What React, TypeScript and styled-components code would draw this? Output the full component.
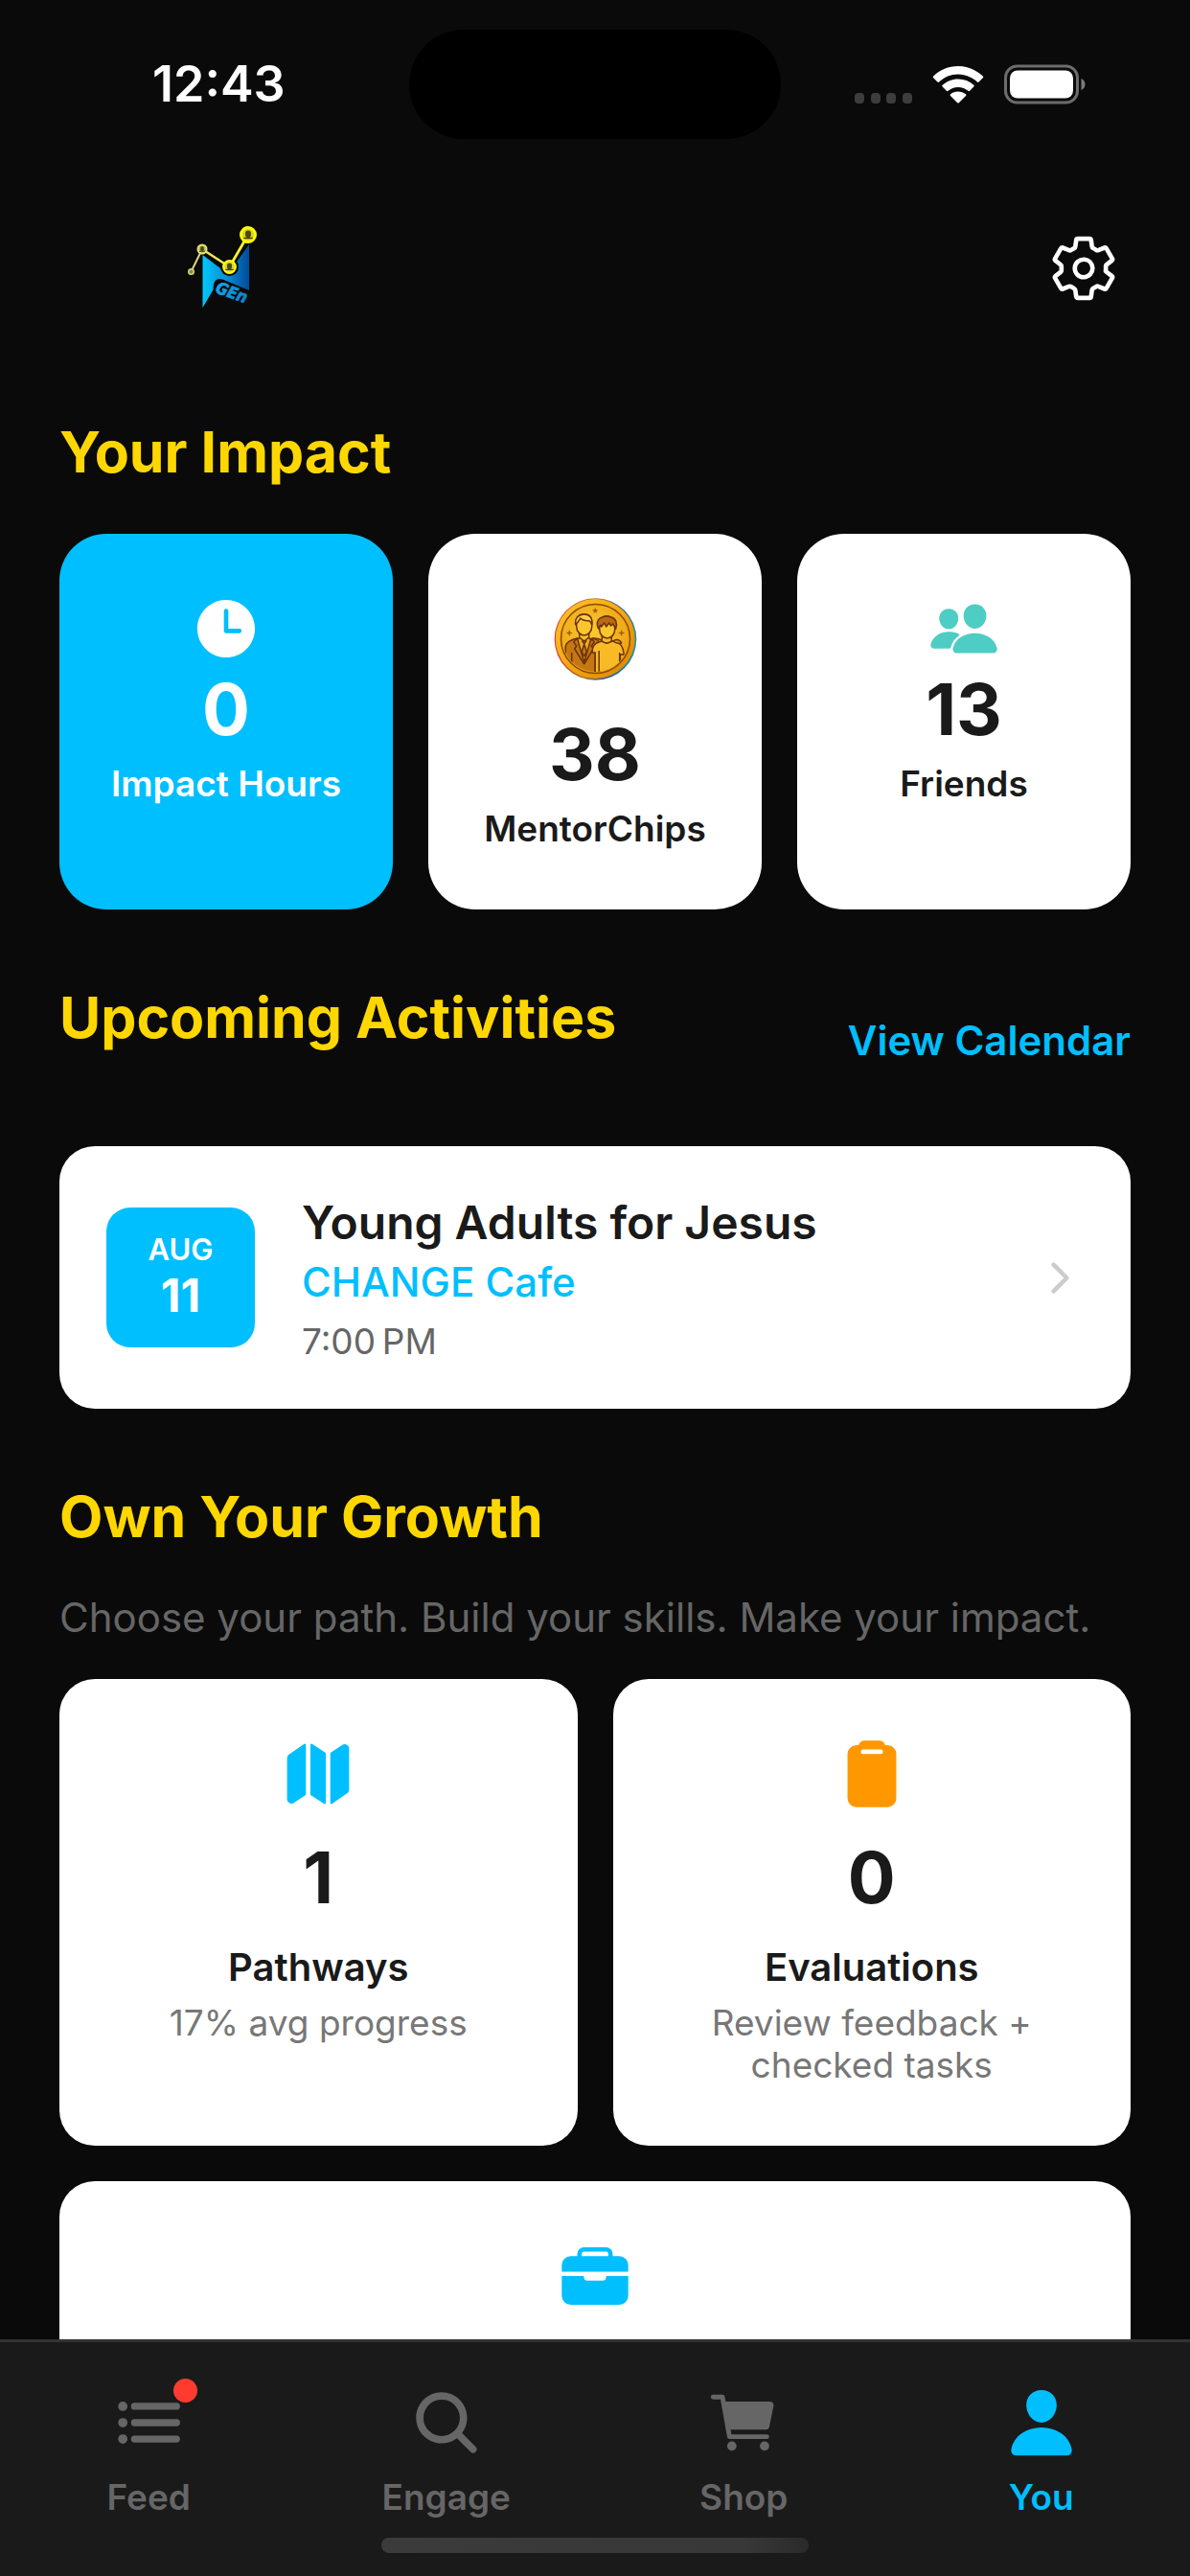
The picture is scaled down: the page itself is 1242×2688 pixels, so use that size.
import React from "react";
import styled, { createGlobalStyle } from "styled-components";
import {
  IoBriefcase,
  IoCart,
  IoChevronForward,
  IoClipboard,
  IoList,
  IoMap,
  IoPeople,
  IoPerson,
  IoSearch,
  IoSettingsOutline,
  IoTime,
} from "react-icons/io5";

const color = {
  page: "#0a0a0a",
  bar: "#1a1a1a",
  ink: "#1a1a1a",
  line: "#333333",
  muted: "#666666",
  soft: "#777777",
  sky: "#00bfff",
  gold: "#ffd700",
  teal: "#4ecdc4",
  orange: "#ff9800",
  red: "#ff3b30",
  white: "#ffffff",
};

const GlobalStyle = createGlobalStyle`
  *, *::before, *::after { box-sizing: border-box; }
  body {
    margin: 0;
    background: ${color.page};
    font-family: Inter, "Liberation Sans", sans-serif;
  }
  h1, h2, p { margin: 0; }
  a { color: inherit; text-decoration: none; }
  button { font: inherit; color: inherit; background: none; border: 0; padding: 0; }
`;

const Screen = styled.div`
  display: flex;
  flex-direction: column;
  height: 100vh;
  overflow: hidden;
  background: ${color.page};
`;

const StatusBar = styled.div`
  display: grid;
  grid-template-columns: 1fr 388px 1fr;
  align-items: center;
  flex: none;
  height: 176px;
`;

const Clock = styled.span`
  padding-left: 159px;
  color: ${color.white};
  font-size: 52px;
  line-height: 62px;
  font-weight: 600;
`;

const Island = styled.div`
  height: 114px;
  border-radius: 57px;
  background: #000000;
`;

const StatusIcons = styled.div`
  display: flex;
  justify-content: flex-end;
  align-items: center;
  gap: 21px;
  padding-right: 109px;
`;

const Scroll = styled.div`
  flex: 1;
  min-height: 0;
  overflow-y: auto;
  scrollbar-width: none;
`;

const Header = styled.header`
  display: flex;
  justify-content: space-between;
  align-items: center;
  padding: 49px;
`;

const IconButton = styled.button`
  display: flex;
  padding: 25px;
  margin: -7px 0;
  color: ${color.white};
  font-size: 74px;
`;

const Main = styled.main`
  display: flex;
  flex-direction: column;
  gap: 76px;
  padding: 51px 62px 62px;
`;

const SectionTitle = styled.h2`
  color: ${color.gold};
  font-size: 59px;
  line-height: 74px;
  font-weight: 700;
  margin-bottom: 48px;
`;

const SectionHead = styled.div`
  display: flex;
  justify-content: space-between;
  align-items: center;
  margin-bottom: 49px;
`;

const TextLink = styled.a`
  color: ${color.sky};
  font-size: 42px;
  line-height: 62px;
  font-weight: 600;
`;

const Lead = styled.p`
  color: ${color.muted};
  font-size: 42px;
  line-height: 62px;
  margin: -11px 0 33px;
`;

const Grid = styled.div<{ $columns: number }>`
  display: grid;
  grid-template-columns: repeat(${(p) => p.$columns}, minmax(0, 1fr));
  gap: 37px;
`;

const Card = styled.div<{ $filled?: boolean; $large?: boolean; $wide?: boolean }>`
  display: flex;
  flex-direction: column;
  align-items: center;
  padding: 62px 24px;
  border-radius: ${(p) => (p.$large ? 49 : 37)}px;
  background: ${(p) => (p.$filled ? color.sky : color.white)};
  color: ${(p) => (p.$filled ? color.white : color.ink)};
  text-align: center;
  ${(p) => p.$wide && "grid-column: 1 / -1; min-height: 392px;"}
`;

const CardIcon = styled.div<{ $color: string; $gap?: number }>`
  display: flex;
  font-size: 74px;
  color: ${(p) => p.$color};
  margin-bottom: ${(p) => p.$gap ?? 0}px;
`;

const Figure = styled.div`
  font-size: 74px;
  line-height: 94px;
  font-weight: 700;
`;

const StatLabel = styled.div`
  margin-top: 9px;
  font-size: 37px;
  line-height: 44px;
  font-weight: 600;
`;

const GrowthLabel = styled.div`
  margin-top: 22px;
  font-size: 40px;
  line-height: 50px;
  font-weight: 600;
`;

const GrowthNote = styled.p`
  margin-top: 11px;
  max-width: 360px;
  color: ${color.soft};
  font-size: 37px;
  line-height: 44px;
`;

const Activity = styled.a`
  display: flex;
  align-items: center;
  gap: 49px;
  padding: 49px;
  border-radius: 37px;
  background: ${color.white};
`;

const DateBox = styled.div`
  flex: none;
  width: 155px;
  padding: 25px 0;
  border-radius: 25px;
  background: ${color.sky};
  color: ${color.white};
  text-align: center;
`;

const Month = styled.div`
  font-size: 31px;
  line-height: 38px;
  font-weight: 600;
`;

const Day = styled.div`
  font-size: 48px;
  line-height: 58px;
  font-weight: 700;
`;

const ActivityText = styled.div`
  flex: 1;
  min-width: 0;
`;

const ActivityTitle = styled.div`
  color: ${color.ink};
  font-size: 48px;
  line-height: 62px;
  font-weight: 600;
`;

const Place = styled.div`
  color: ${color.sky};
  font-size: 42px;
  line-height: 62px;
  font-weight: 500;
`;

const Time = styled.div`
  margin-top: 10px;
  color: ${color.muted};
  font-size: 37px;
  line-height: 42px;
`;

const Chevron = styled(IoChevronForward)`
  flex: none;
  color: #cccccc;
  font-size: 49px;
`;

const Footer = styled.footer`
  flex: none;
  padding: 45px 0 24px;
  border-top: 3px solid ${color.line};
  background: ${color.bar};
`;

const Tabs = styled.nav`
  display: grid;
  grid-template-columns: repeat(4, 1fr);
`;

const Tab = styled.a<{ $active?: boolean }>`
  display: flex;
  flex-direction: column;
  align-items: center;
  gap: 17px;
  color: ${(p) => (p.$active ? color.sky : color.muted)};
  font-size: 37px;
  line-height: 44px;
  font-weight: 600;
`;

const TabIcon = styled.span`
  position: relative;
  display: flex;
  font-size: 78px;
`;

const Badge = styled.span`
  position: absolute;
  top: -7px;
  right: -12px;
  width: 25px;
  height: 25px;
  border-radius: 50%;
  background: ${color.red};
`;

const HomeIndicator = styled.div`
  width: 446px;
  max-width: 50%;
  height: 16px;
  margin: 20px auto 0;
  border-radius: 8px;
  background: linear-gradient(90deg, #3b3b3b 0%, #383838 85%, #2a2a2a 100%);
`;

function SignalDots() {
  return (
    <svg width="60" height="42" viewBox="0 0 60 42" fill="#3d3d3d" aria-hidden="true">
      {[0, 17, 33, 50].map((x) => (
        <rect key={x} x={x} y="30" width="10" height="11" rx="4" />
      ))}
    </svg>
  );
}

function Wifi() {
  return (
    <svg width="54" height="42" viewBox="0 0 54 42" fill="#ffffff" aria-hidden="true">
      <path d="M27 2C17 2 8 6 1.200 12.400a1.200 1.200 0 0 0 0 1.800l4.200 4.300a1.200 1.200 0 0 0 1.700 0C12.400 13.300 19.300 10.400 27 10.400s14.600 2.900 19.900 8.100a1.200 1.200 0 0 0 1.700 0l4.200-4.300a1.200 1.200 0 0 0 0-1.800C46 6 37 2 27 2Z" />
      <path d="M27 15.500c-6.400 0-12 2.400-16.300 6.300a1.200 1.200 0 0 0 0 1.800l4.200 4.200a1.200 1.200 0 0 0 1.700 0A15.500 15.500 0 0 1 27 24c4 0 7.600 1.400 10.400 3.800a1.200 1.200 0 0 0 1.700 0l4.200-4.200a1.200 1.200 0 0 0 0-1.800A24 24 0 0 0 27 15.500Z" />
      <path d="M27 28.500c-3 0-5.700.900-8 2.700a1.200 1.200 0 0 0 0 1.800l7.200 7.200a1.100 1.100 0 0 0 1.600 0L35 33a1.200 1.200 0 0 0 0-1.800 12.800 12.800 0 0 0-8-2.700Z" />
    </svg>
  );
}

function Battery() {
  return (
    <svg width="85" height="42" viewBox="0 0 85 42" aria-hidden="true">
      <rect x="1.500" y="2" width="75" height="38" rx="12" fill="none" stroke="#6c6c6c" strokeWidth="3" />
      <rect x="6" y="6.500" width="66" height="29" rx="8" fill="#ffffff" />
      <path d="M80.500 15c2.500 1 4 3.400 4 6s-1.500 5-4 6Z" fill="#7c7c7c" />
    </svg>
  );
}

function Pawn({ x, y, s }: { x: number; y: number; s: number }) {
  return (
    <g transform={`translate(${x} ${y}) scale(${s})`} fill="#4a480c">
      <circle cy="-1.500" r="2.700" />
      <path d="M-4.400 3.800v-1.400h2.600c-.300-1-1-1.600-1-2.600h5.600c0 1-.700 1.600-1 2.600h2.600v1.400Z" />
    </g>
  );
}

function Logo() {
  return (
    <svg width="366" height="110" viewBox="-3 5 110 110" role="img" aria-label="N GEn">
      <defs>
        <linearGradient id="flag" x1="0" y1="0" x2="1" y2="0">
          <stop offset="0" stopColor="#00c8fa" />
          <stop offset="0.500" stopColor="#0a8fd8" />
          <stop offset="1" stopColor="#004b98" />
        </linearGradient>
        <linearGradient id="word" x1="0" y1="0" x2="1" y2="0">
          <stop offset="0" stopColor="#14a5e6" />
          <stop offset="1" stopColor="#0c84cc" />
        </linearGradient>
      </defs>
      <path d="M31.500 46 58 66 80 35V88L62 80 44 80 31.500 101Z" fill="url(#flag)" />
      <path d="M19.500 63.500 31 40 59.500 58.500 79 25" fill="none" stroke="#0a0a0a" strokeWidth="6" />
      <circle cx="59.500" cy="58.500" r="9.500" fill="#0a0a0a" />
      <path d="M43 77q1-6 6-6 4 0 8 2.500L80 83v20H58L44 87q-2-3-1-10Z" fill="#0a0a0a" />
      <text
        x="44"
        y="85"
        transform="rotate(20 44 85)"
        fill="url(#word)"
        stroke="url(#word)"
        strokeWidth="0.700"
        fontFamily="'DejaVu Sans Condensed', 'Liberation Sans', sans-serif"
        fontSize="17"
        fontWeight="700"
        fontStyle="italic"
      >
        GEn
      </text>
      <path d="M19.500 63.500 31 40" stroke="#d9d873" strokeWidth="2" />
      <path d="M31 40 59.500 58.500" stroke="#eeec55" strokeWidth="2.400" />
      <path d="M59.500 58.500 79 25" stroke="#f8f52a" strokeWidth="2.800" />
      <circle cx="19.500" cy="63.500" r="2.800" fill="#8a8942" stroke="#d6d47c" strokeWidth="1.400" />
      <circle cx="31" cy="40" r="4.600" fill="#b5b35c" stroke="#e9e77a" strokeWidth="1.800" />
      <circle cx="59.500" cy="58.500" r="6.300" fill="#d6d33a" stroke="#fdfb05" strokeWidth="2.200" />
      <circle cx="79" cy="25" r="7.500" fill="#d8d520" stroke="#ffff00" strokeWidth="3" />
      <Pawn x={31} y={40} s={0.7} />
      <Pawn x={59.5} y={58.5} s={0.95} />
      <Pawn x={79} y={25} s={1.1} />
    </svg>
  );
}

function Coin() {
  return (
    <svg width="99" height="99" viewBox="11.300 10 99 99" role="img" aria-label="MentorChips coin">
      <defs>
        <linearGradient id="rim" x1="0" y1="0" x2="1" y2="1">
          <stop offset="0" stopColor="#ffc32b" />
          <stop offset="0.500" stopColor="#f5a80f" />
          <stop offset="1" stopColor="#d98200" />
        </linearGradient>
        <linearGradient id="fringe" x1="0" y1="0.400" x2="1" y2="0.600">
          <stop offset="0" stopColor="#d8262c" />
          <stop offset="0.450" stopColor="#a8742c" />
          <stop offset="0.750" stopColor="#2c5f9c" />
          <stop offset="1" stopColor="#1795a8" />
        </linearGradient>
        <radialGradient id="face" cx="0.450" cy="0.400" r="0.600">
          <stop offset="0" stopColor="#fdc82f" />
          <stop offset="1" stopColor="#eca314" />
        </radialGradient>
        <clipPath id="faceClip">
          <circle cx="60.800" cy="57.500" r="34.500" />
        </clipPath>
      </defs>
      <circle cx="60.800" cy="58" r="42.800" fill="url(#fringe)" />
      <circle cx="60.500" cy="57.600" r="41.500" fill="url(#rim)" />
      <circle cx="60.800" cy="57.500" r="36" fill="url(#face)" stroke="#8a4a06" strokeWidth="1.500" />
      <g clipPath="url(#faceClip)" stroke="#6b3208" strokeWidth="1.500" strokeLinejoin="round">
        <path d="M29.500 96V67c0-6 5-8 12-10l8 12 8-12c5 1 8 3 8 6v33Z" fill="#c57812" />
        <path d="M42 58 49 82 56 58 49 54Z" fill="#edaa22" />
        <path d="M41.500 57 38 61l3 4-2 3 10 16M56.500 57l3 4-3 4 2 3-9.500 16" fill="none" />
        <path d="m47 60 2 2.500 2-2.500-2-2Zm2 3-2.500 8L49 76l2.500-5Z" fill="#c57812" />
        <path d="M44 51v5l5 4 5-4v-5Z" fill="#f9c02c" />
        <path d="M41 40c0-5 3-8 8-8s8 3 8 8v5c0 5-4 9-8 9s-8-4-8-9Z" fill="#fbc52e" />
        <path d="M40 43c-1-7 3-11 9-11 6 0 9 4 8 11l-2-4c-5 0-8-1-10-3-1 3-3 4-5 7Z" fill="#fccf48" />
        <path d="M36 72v22M60.500 72v24" fill="none" />
        <path d="M60.500 96V72h-3c0-8 3-10 10-12l5 2 6-2c9 1 11 6 12 14h-4v22Z" fill="#f8ba25" />
        <path d="M64.500 70v26M86 72v20" fill="none" />
        <path d="M67.500 54v6q5 4 10 0v-6Z" fill="#f8ba25" />
        <path d="M65 45c0-5 3-8 8-8s8 3 8 8v3c0 5-4 9-8 9s-8-4-8-9Z" fill="#fbc52e" />
        <path d="M64 47c-3-5-1-11 4-12 4-2 7-1 9 0 5 1 7 6 5 12l-3-5-2 2-2-3-3 4-2-4-3 4-1-2Z" fill="#b96b14" />
        <path d="M58 57c4 0 8 1 10 3M79 60c4-3 8-1 9 2-3 1-6 0-9-2Z" fill="#d99019" />
      </g>
      <g fill="#a65f0a">
        <path d="m60.500 25 .900 2 2 .300-1.500 1.500.300 2-1.700-1-1.700 1 .300-2-1.500-1.500 2-.300Z" />
        <path d="m33.500 48 .900 2.600 2.600.900-2.600.900-.900 2.600-.900-2.600-2.600-.900 2.600-.900ZM88 48l.900 2.600 2.600.900-2.600.900L88 55l-.900-2.600-2.600-.900 2.600-.900Z" />
      </g>
    </svg>
  );
}

const tabs = [
  { label: "Feed", icon: <IoList />, badge: true },
  { label: "Engage", icon: <IoSearch /> },
  { label: "Shop", icon: <IoCart /> },
  { label: "You", icon: <IoPerson />, active: true },
];

export default function App() {
  return (
    <Screen>
      <GlobalStyle />
      <StatusBar>
        <Clock>12:43</Clock>
        <Island />
        <StatusIcons>
          <SignalDots />
          <Wifi />
          <Battery />
        </StatusIcons>
      </StatusBar>
      <Scroll>
        <Header>
          <Logo />
          <IconButton type="button" aria-label="Settings">
            <IoSettingsOutline />
          </IconButton>
        </Header>
        <Main>
          <section>
            <SectionTitle>Your Impact</SectionTitle>
            <Grid $columns={3}>
              <Card $large $filled>
                <CardIcon $color={color.white}>
                  <IoTime />
                </CardIcon>
                <Figure>0</Figure>
                <StatLabel>Impact Hours</StatLabel>
              </Card>
              <Card $large>
                <CardIcon $color={color.gold} $gap={22}>
                  <Coin />
                </CardIcon>
                <Figure>38</Figure>
                <StatLabel>MentorChips</StatLabel>
              </Card>
              <Card $large>
                <CardIcon $color={color.teal}>
                  <IoPeople />
                </CardIcon>
                <Figure>13</Figure>
                <StatLabel>Friends</StatLabel>
              </Card>
            </Grid>
          </section>

          <section>
            <SectionHead>
              <SectionTitle>Upcoming Activities</SectionTitle>
              <TextLink href="#calendar">View Calendar</TextLink>
            </SectionHead>
            <Activity href="#activity">
              <DateBox>
                <Month>AUG</Month>
                <Day>11</Day>
              </DateBox>
              <ActivityText>
                <ActivityTitle>Young Adults for Jesus</ActivityTitle>
                <Place>CHANGE Cafe</Place>
                <Time>{"7:00\u202fPM"}</Time>
              </ActivityText>
              <Chevron />
            </Activity>
          </section>

          <section>
            <SectionTitle>Own Your Growth</SectionTitle>
            <Lead>Choose your path. Build your skills. Make your impact.</Lead>
            <Grid $columns={2}>
              <Card>
                <CardIcon $color={color.sky} $gap={24}>
                  <IoMap />
                </CardIcon>
                <Figure>1</Figure>
                <GrowthLabel>Pathways</GrowthLabel>
                <GrowthNote>17% avg progress</GrowthNote>
              </Card>
              <Card>
                <CardIcon $color={color.orange} $gap={24}>
                  <IoClipboard />
                </CardIcon>
                <Figure>0</Figure>
                <GrowthLabel>Evaluations</GrowthLabel>
                <GrowthNote>Review feedback + checked tasks</GrowthNote>
              </Card>
              <Card $wide>
                <CardIcon $color={color.sky}>
                  <IoBriefcase />
                </CardIcon>
              </Card>
            </Grid>
          </section>
        </Main>
      </Scroll>
      <Footer>
        <Tabs>
          {tabs.map((tab) => (
            <Tab
              key={tab.label}
              href={`#${tab.label.toLowerCase()}`}
              $active={tab.active}
              aria-current={tab.active ? "page" : undefined}
            >
              <TabIcon>
                {tab.icon}
                {tab.badge && <Badge />}
              </TabIcon>
              {tab.label}
            </Tab>
          ))}
        </Tabs>
        <HomeIndicator />
      </Footer>
    </Screen>
  );
}
